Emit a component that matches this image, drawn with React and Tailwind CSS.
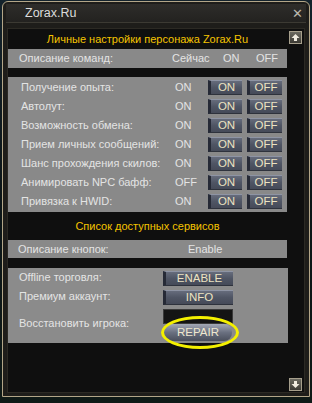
const font = { fontFamily: '"Liberation Sans", Arial, sans-serif' }

const toggles = [
  ['Получение опыта:', 'ON'],
  ['Автолут:', 'ON'],
  ['Возможность обмена:', 'ON'],
  ['Прием личных сообщений:', 'ON'],
  ['Шанс прохождения скилов:', 'ON'],
  ['Анимировать NPC бафф:', 'OFF'],
  ['Привязка к HWID:', 'ON'],
]

function GameButton({ children, className = '' }) {
  return (
    <div
      className={`flex items-center justify-center h-[15px] border-t border-t-[#8e94a4] border-l-[3px] border-l-[#262a36] border-b border-b-[#2e323c] bg-gradient-to-b from-[#666c7c] via-[#4f5564] to-[#454a58] text-[#ece3c2] text-[11.5px] leading-none ${className}`}
    >
      {children}
    </div>
  )
}

function ScrollButton({ down }) {
  return (
    <div className="w-[13px] h-[13px] border border-[#a69f8c] bg-gradient-to-b from-[#6c6a60] to-[#3c3a34] flex items-center justify-center">
      <svg viewBox="0 0 9 9" className={`w-[9px] h-[9px] ${down ? 'rotate-180' : ''}`}>
        <path d="M4.5 1 L8.5 5 L6 5 L6 8 L3 8 L3 5 L0.5 5 Z" fill="#f1ece0" />
      </svg>
    </div>
  )
}

export default function App() {
  return (
    <div className="w-[312px] h-[403px] bg-gradient-to-b from-[#14232c] via-[#0c1517] to-[#0f1a17] overflow-hidden" style={font}>
      <div className="ml-[2px] mt-[1px] w-[308px] h-[396px] rounded-tl-[6px] rounded-tr-[6px] border border-[#b3a688] bg-[#1e1d1a] flex flex-col">
        {/* Title bar */}
        <div className="h-[19px] mx-[3px] mt-[2px] flex items-center justify-between bg-gradient-to-b from-[#2e2d2a] to-[#232220] border-b border-[#3c3a33]">
          <span className="ml-[19px] text-[#dcdcdc] text-[12.5px] leading-none">Zorax.Ru</span>
          <span className="mr-[3px] text-[#b9b6ac] text-[13px] leading-none">✕</span>
        </div>

        {/* Body */}
        <div className="mx-[4px] mt-[5px] h-[365px] flex bg-[#0f0f0f] border border-[#2c2a24] whitespace-nowrap">
          <div className="w-[279px] flex flex-col">
            <div className="h-[20px] flex items-center justify-center text-[#f5c400] text-[11px]">
              Личные настройки персонажа Zorax.Ru
            </div>

            <div className="h-[19px] bg-[#898989] flex items-center text-[#e4e4e4] text-[11px]">
              <span className="w-[164px] pl-[11px]">Описание команд:</span>
              <span className="w-[51px]">Сейчас</span>
              <span className="w-[33px]">ON</span>
              <span>OFF</span>
            </div>

            <div className="mt-[9px] bg-[#898989] pt-[1px] pb-[1px] flex flex-col">
              {toggles.map(([label, state]) => (
                <div key={label} className="h-[19px] flex items-center text-[#e4e4e4] text-[11px]">
                  <span className="w-[155px] pl-[13px]">{label}</span>
                  <span className="w-[45px] pl-[12px]">{state}</span>
                  <GameButton className="w-[34px]">ON</GameButton>
                  <GameButton className="w-[35px] ml-[5px]">OFF</GameButton>
                </div>
              ))}
            </div>

            <div className="h-[28px] flex items-center justify-center text-[#f5c400] text-[11px]">
              Список доступных сервисов
            </div>

            <div className="h-[18px] w-[279px] bg-[#898989] flex items-center text-[#e4e4e4] text-[11px]">
              <span className="w-[180px] pl-[10px]">Описание кнопок:</span>
              <span>Enable</span>
            </div>

            <div className="mt-[10px] h-[75px] w-[280px] bg-[#8b8b8b] flex text-[#e4e4e4] text-[11px]">
              <div className="w-[155px] pl-[11px] flex flex-col">
                <div className="h-[19px] flex items-center">Offline торговля:</div>
                <div className="h-[19px] flex items-center">Премиум аккаунт:</div>
                <div className="h-[19px] mt-[8px] flex items-center">Восстановить игрока:</div>
              </div>
              <div className="relative w-[70px] pt-[3px] flex flex-col">
                <GameButton className="w-[70px]">ENABLE</GameButton>
                <GameButton className="w-[70px] mt-[4px]">INFO</GameButton>
                <div className="w-[70px] h-[15px] mt-[4px] bg-[#141414] border border-[#3a3a3a]" />
                <div className="w-[68px] h-[17px] ml-[1px] rounded-[8px] bg-gradient-to-b from-[#a4a9b6] via-[#6a7080] to-[#4a4f5c] flex items-center justify-center text-[#efe8cf] text-[11.5px] leading-none">
                  REPAIR
                </div>
                <div className="absolute left-[-2px] top-[48px] w-[78px] h-[33px] rounded-[50%] border-[3px] border-[#f4f000]" />
              </div>
            </div>
          </div>

          {/* Scroll column */}
          <div className="flex-1 flex flex-col items-center justify-between pt-[2px] pb-[1px]">
            <ScrollButton />
            <ScrollButton down />
          </div>
        </div>
      </div>
    </div>
  )
}
